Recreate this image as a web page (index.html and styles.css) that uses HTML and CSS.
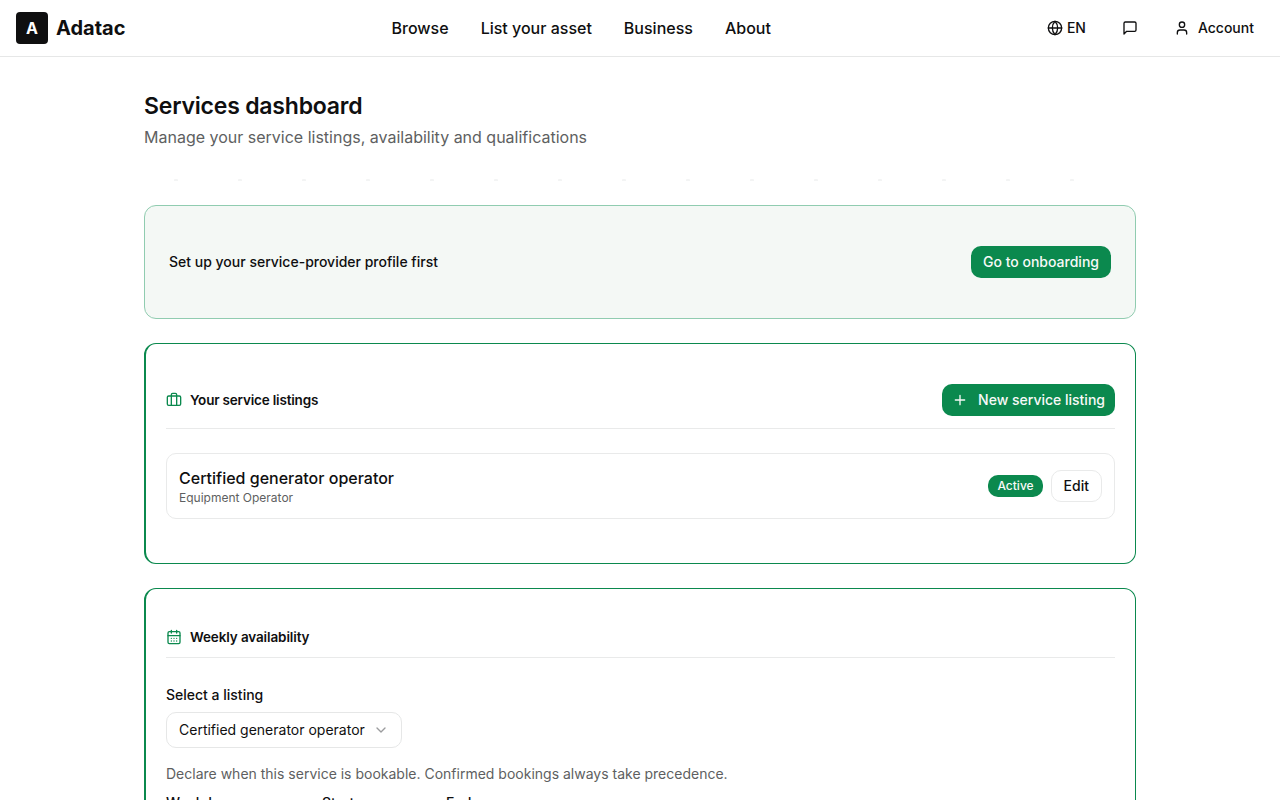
FILE: index.html
```html
<!DOCTYPE html>
<html lang="en">
<head>
<meta charset="utf-8">
<title>Services dashboard – Adatac</title>
<link rel="stylesheet" href="styles.css">
</head>
<body>
<header class="topbar">
  <a class="brand"><span class="brand-mark">A</span><span class="brand-name">Adatac</span></a>
  <nav class="nav"><a>Browse</a><a>List your asset</a><a>Business</a><a>About</a></nav>
  <div class="actions">
    <a class="lang"><svg class="icon" viewBox="0 0 24 24"><circle cx="12" cy="12" r="10"/><path d="M12 2a14.5 14.5 0 0 0 0 20 14.5 14.5 0 0 0 0-20"/><path d="M2 12h20"/></svg>EN</a>
    <a class="messages"><svg class="icon" viewBox="0 0 24 24"><path d="M21 15a2 2 0 0 1-2 2H7l-4 4V5a2 2 0 0 1 2-2h14a2 2 0 0 1 2 2z"/></svg></a>
    <a class="account"><svg class="icon" viewBox="0 0 24 24"><path d="M19 21v-2a4 4 0 0 0-4-4H9a4 4 0 0 0-4 4v2"/><circle cx="12" cy="7" r="4"/></svg>Account</a>
  </div>
</header>
<main class="page">
  <div class="page-head">
    <h1 class="title">Services dashboard</h1>
    <p class="subtitle">Manage your service listings, availability and qualifications</p>
  </div>
  <div class="dots"></div>
  <section class="card notice">
    <p class="notice-text">Set up your service-provider profile first</p>
    <button class="btn primary">Go to onboarding</button>
  </section>
  <section class="card panel listings">
    <div class="panel-head">
      <h2 class="panel-title"><svg class="icon" viewBox="0 0 24 24"><path d="M16 20V4a2 2 0 0 0-2-2h-4a2 2 0 0 0-2 2v16"/><rect width="20" height="14" x="2" y="6" rx="2"/></svg><span class="heading-listings">Your service listings</span></h2>
      <button class="btn primary with-icon"><svg class="icon" viewBox="0 0 24 24"><path d="M5 12h14M12 5v14"/></svg>New service listing</button>
    </div>
    <div class="listing">
      <div>
        <p class="listing-name">Certified generator operator</p>
        <p class="listing-type">Equipment Operator</p>
      </div>
      <div class="listing-actions"><span class="badge">Active</span><button class="btn outline">Edit</button></div>
    </div>
  </section>
  <section class="card panel availability">
    <div class="panel-head">
      <h2 class="panel-title"><svg class="icon" viewBox="0 0 24 24"><path d="M8 2v4M16 2v4"/><rect width="18" height="18" x="3" y="4" rx="2"/><path d="M3 10h18M8 14h.01M12 14h.01M16 14h.01M8 18h.01M12 18h.01M16 18h.01"/></svg><span class="heading-availability">Weekly availability</span></h2>
    </div>
    <p class="label">Select a listing</p>
    <button class="select">Certified generator operator<svg class="icon chevron" viewBox="0 0 24 24"><path d="m6 9 6 6 6-6"/></svg></button>
    <p class="hint">Declare when this service is bookable. Confirmed bookings always take precedence.</p>
    <div class="slot-labels"><span>Weekday</span><span>Start</span><span>End</span></div>
  </section>
</main>
</body>
</html>
```
FILE: styles.css
```css
* { box-sizing: border-box; }
html, body { height: 100%; overflow: hidden; }
body { margin: 0; background: #fff; color: #0f0f10; font-family: Inter, sans-serif; font-size: 14px; line-height: 20px; }
h1, h2, p { margin: 0; }
button { font: inherit; color: inherit; margin: 0; }
.icon { width: 16px; height: 16px; flex: none; fill: none; stroke: currentColor; stroke-width: 2; stroke-linecap: round; stroke-linejoin: round; }

.topbar { height: 57px; border-bottom: 1px solid #e6e7e7; padding: 0 26px 0 16px; display: flex; justify-content: space-between; align-items: center; font-weight: 500; }
.brand { display: flex; align-items: center; gap: 8px; }
.brand-mark { width: 32px; height: 32px; border-radius: 4px; background: #0f0f10; color: #fff; display: grid; place-items: center; font-size: 16px; font-weight: 700; }
.brand-name { font-size: 20px; font-weight: 700; line-height: 28px; }
.nav { display: flex; gap: 32px; font-size: 16px; line-height: 24px; margin-right: 10px; }
.actions { display: flex; align-items: center; justify-content: flex-end; }
.lang { display: flex; align-items: center; gap: 4px; }
.messages { display: flex; margin: 0 36px; }
.account { display: flex; align-items: center; gap: 8px; }

.page { width: 992px; margin: 0 auto; padding-top: 32px; }
.title { font-size: 23px; line-height: 32px; font-weight: 600; letter-spacing: -0.2px; padding-top: 1px; }
.subtitle { margin-top: 3px; font-size: 16px; line-height: 24px; color: #5e5f61; }
.dots { width: 960px; height: 8px; margin: 24px 0; background: radial-gradient(circle at 32px 8px, #f3f4f4 2px, transparent 2.5px) 0 0 / 64px 8px repeat-x; }
.card { border: 1px solid #0b894e; border-radius: 12px; margin-bottom: 24px; background: #fff; }
.notice { height: 114px; padding: 0 24px; display: flex; align-items: center; justify-content: space-between; border-color: #90ccb0; background: #f4f8f5; font-weight: 500; }
.btn { height: 32px; padding: 0 12px; border: 0; border-radius: 10px; font-weight: 500; display: flex; align-items: center; justify-content: center; }
.primary { background: #0b894e; color: #f8f9f8; }
.with-icon { gap: 10px; padding: 0 10px; }
.outline { border: 1px solid #e9eaea; background: #fff; }
.panel { border-left-width: 2px; padding: 40px 20px; }
.listings { height: 221px; }
.availability { height: 400px; }
.panel-head { display: flex; align-items: center; justify-content: space-between; border-bottom: 1px solid #e9eaea; padding-bottom: 12px; margin-bottom: 24px; }
.panel-title { display: flex; align-items: center; gap: 8px; font-size: 13.5px; line-height: 16px; font-weight: 600; }
.panel-title .icon { color: #0b894e; }
.heading-listings { letter-spacing: -0.19px; }
.heading-availability { letter-spacing: -0.12px; }
.listing { height: 66px; padding: 0 12px; border: 1px solid #e9eaea; border-radius: 10px; display: flex; align-items: center; justify-content: space-between; }
.listing-name { font-size: 16px; line-height: 24px; font-weight: 500; }
.listing-type { font-size: 12px; line-height: 16px; color: #5e5f61; }
.listing-actions { display: flex; align-items: center; gap: 8px; }
.badge { height: 22px; padding: 0 9px; border-radius: 10px; background: #0b894e; color: #f8f9f8; font-size: 12px; line-height: 22px; font-weight: 500; }
.label { font-weight: 500; margin-top: 27px; }
.select { width: 236px; height: 36px; margin-top: 7px; padding: 0 12px; display: flex; align-items: center; justify-content: space-between; border: 1px solid #e6e7e7; border-radius: 10px; background: #fff; }
.chevron { color: #9b9c9e; }
.hint { margin-top: 16px; color: #5e5f61; }
.slot-labels { display: grid; grid-template-columns: 156px 124px 124px; margin-top: 9px; font-weight: 500; }
```
